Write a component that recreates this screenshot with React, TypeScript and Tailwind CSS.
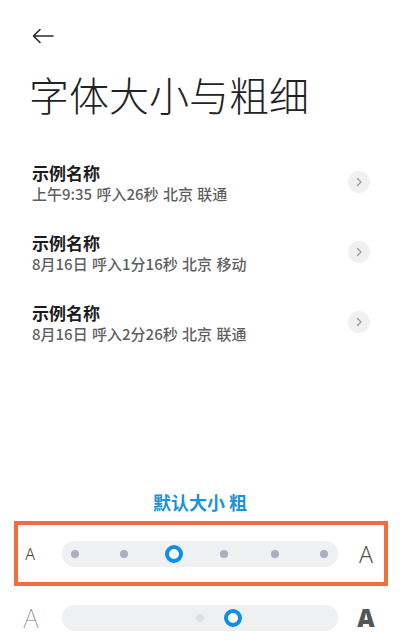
import React from "react";

const font = { fontFamily: '"Noto Sans CJK SC", "Noto Sans", sans-serif' };

function Chevron() {
  return (
    <div className="w-[22px] h-[22px] rounded-full bg-[#f0f0f0] flex items-center justify-center">
      <svg width="8" height="10" viewBox="0 0 8 10" fill="none">
        <path d="M2.5 1.5 L6 5 L2.5 8.5" stroke="#9a9a9a" strokeWidth="1.3" strokeLinecap="round" strokeLinejoin="round" />
      </svg>
    </div>
  );
}

function Row({ sub }: { sub: string }) {
  return (
    <div className="flex items-center justify-between h-[70px] pl-[32px] pr-[30px]">
      <div className="flex flex-col">
        <div className="text-[17px] leading-[22px] font-bold text-[#1c1c1c]">示例名称</div>
        <div className="text-[15px] leading-[19px] font-medium text-[#5f5f5f] [word-spacing:1px]">{sub}</div>
      </div>
      <Chevron />
    </div>
  );
}

function Ring() {
  return <div className="w-[18px] h-[18px] rounded-full border-[4px] border-[#0d8ee9] bg-white" />;
}

function Dot({ light }: { light?: boolean }) {
  return <div className={`w-[8px] h-[8px] rounded-full ${light ? "bg-[#dfe0e6]" : "bg-[#a8afc0]"}`} />;
}

export default function App() {
  const positions = [75, 124, 174, 224, 275, 324];
  return (
    <div className="w-[400px] h-[644px] bg-white overflow-hidden relative" style={font}>
      <div className="pt-[28px] pl-[32px]">
        <svg width="22" height="16" viewBox="0 0 22 16" fill="none">
          <path d="M21 8 H2 M8 1.5 L1.5 8 L8 14.5" stroke="#2a2a2a" strokeWidth="1.6" strokeLinecap="round" strokeLinejoin="round" />
        </svg>
      </div>
      <div className="pl-[29px] mt-[28px] text-[40px] leading-[44px] font-light text-[#222]">字体大小与粗细</div>
      <div className="mt-[31px]">
        <Row sub="上午9:35 呼入26秒 北京 联通" />
        <Row sub="8月16日 呼入1分16秒 北京 移动" />
        <Row sub="8月16日 呼入2分26秒 北京 联通" />
      </div>
      <div className="absolute left-0 right-0 top-[490px] flex flex-col items-center">
        <div className="text-[18px] leading-[24px] font-bold text-[#1d93d8]">默认大小 粗</div>
      </div>
      <div className="absolute left-[14px] top-[521px] w-[374px] h-[65px] border-[4px] border-[#f26d3d]" />
      <div className="absolute left-0 top-[541px] w-[400px] h-[26px] flex items-center">
        <div className="w-[62px] flex justify-center pr-[2px] text-[16px] font-light text-[#444]" style={{ fontFamily: '"Noto Sans", sans-serif' }}>A</div>
        <div className="relative w-[276px] h-[26px] rounded-full bg-[#eff0f2]">
          {positions.map((p, i) => (
            <div key={i} className="absolute top-1/2 -translate-y-1/2 -translate-x-1/2" style={{ left: p - 62 }}>
              {i === 2 ? <Ring /> : <Dot />}
            </div>
          ))}
        </div>
        <div className="flex-1 flex justify-center pr-[6px] text-[23px] font-light text-[#555]" style={{ fontFamily: '"Noto Sans", sans-serif' }}>A</div>
      </div>
      <div className="absolute left-0 top-[605px] w-[400px] h-[26px] flex items-center">
        <div className="w-[62px] flex justify-center text-[26px] font-thin text-[#777]" style={{ fontFamily: '"Noto Sans", sans-serif' }}>A</div>
        <div className="relative w-[276px] h-[26px] rounded-full bg-[#eff0f2]">
          <div className="absolute top-1/2 -translate-y-1/2 -translate-x-1/2" style={{ left: 200 - 62 }}><Dot light /></div>
          <div className="absolute top-1/2 -translate-y-1/2 -translate-x-1/2" style={{ left: 233 - 62 }}><Ring /></div>
        </div>
        <div className="flex-1 flex justify-center pr-[6px] text-[24px] font-black text-[#555]" style={{ fontFamily: '"Noto Sans", sans-serif' }}>A</div>
      </div>
    </div>
  );
}
